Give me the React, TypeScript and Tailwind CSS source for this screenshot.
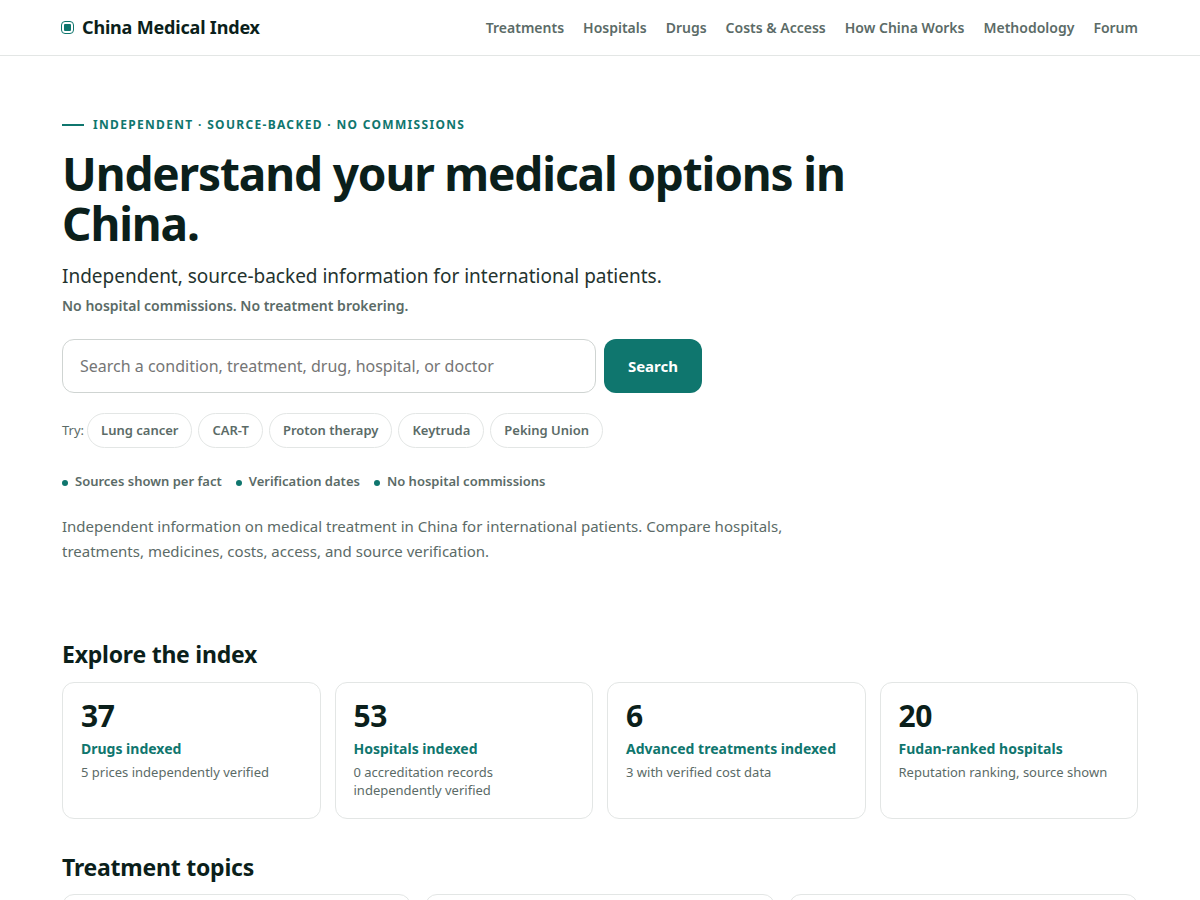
const navItems = [
  { href: "#treatments", label: "Treatments" },
  { href: "#hospitals", label: "Hospitals" },
  { href: "#drugs", label: "Drugs" },
  { href: "#costs", label: "Costs & Access" },
  { href: "#how-china-works", label: "How China Works" },
  { href: "#methodology", label: "Methodology" },
  { href: "#forum", label: "Forum" },
]

const suggestions = ["Lung cancer", "CAR-T", "Proton therapy", "Keytruda", "Peking Union"]

const trustPoints = ["Sources shown per fact", "Verification dates", "No hospital commissions"]

const stats = [
  { value: "37", label: "Drugs indexed", note: "5 prices independently verified" },
  { value: "53", label: "Hospitals indexed", note: "0 accreditation records independently verified" },
  { value: "6", label: "Advanced treatments indexed", note: "3 with verified cost data" },
  { value: "20", label: "Fudan-ranked hospitals", note: "Reputation ranking, source shown" },
]

function SiteHeader() {
  return (
    <header className="border-b border-[#e3e6e5]">
      <div className="mx-auto flex h-[55px] max-w-[1120px] items-center justify-between px-[22px]">
        <a href="#home" className="flex items-center gap-2 text-lg leading-[29px] font-bold tracking-[-0.01em] text-[#0b1f1b]">
          <span className="-ml-px flex size-[13px] items-center justify-center rounded-[4px] border border-[#0f766e]">
            <span className="size-[7px] rounded-[1px] bg-[#0f766e]" />
          </span>
          China Medical Index
        </a>
        <nav className="flex gap-[19px] text-sm font-semibold text-[#5b6b67]">
          {navItems.map((item) => (
            <a key={item.href} href={item.href} className="hover:text-[#0f766e]">
              {item.label}
            </a>
          ))}
        </nav>
      </div>
    </header>
  )
}

function Hero() {
  return (
    <section className="pt-[60px]">
      <p className="flex items-center gap-[9px] text-xs leading-[18px] font-bold tracking-[0.11em] text-[#0f766e] uppercase">
        <span className="h-[2px] w-[22px] bg-[#0f766e]" />
        Independent · Source-backed · No commissions
      </p>
      <h1 className="mt-[14px] max-w-[820px] text-[46px] leading-[50px] font-bold tracking-tight text-[#0b1f1b]">
        Understand your medical options in China.
      </h1>
      <p className="mt-[13px] text-[19px] leading-[30px] text-[#24332f]">
        Independent, source-backed information for international patients.
      </p>
      <p className="mt-1 text-sm leading-[22px] font-semibold text-[#5b6b67]">
        No hospital commissions. No treatment brokering.
      </p>

      <form className="mt-[22px] flex max-w-[640px] gap-2" onSubmit={(e) => e.preventDefault()}>
        <input
          type="search"
          aria-label="Search the index"
          placeholder="Search a condition, treatment, drug, hospital, or doctor"
          className="h-[54px] min-w-0 flex-1 rounded-xl border border-[#cfd4d2] bg-white px-[17px] text-base placeholder:text-[#757575]"
        />
        <button type="submit" className="rounded-xl bg-[#0f766e] px-6 text-[15px] font-bold text-white">
          Search
        </button>
      </form>

      <div className="mt-5 flex items-center gap-[3px] text-[13px] leading-[19px] text-[#5b6b67]">
        <span>Try:</span>
        <div className="flex flex-wrap gap-1.5">
          {suggestions.map((item) => (
            <a key={item} href="#search" className="rounded-full border border-[#e3e6e5] px-[13px] py-[7px] font-semibold">
              {item}
            </a>
          ))}
        </div>
      </div>

      <ul className="mt-[23px] flex flex-wrap gap-[14px] text-[13px] leading-5 font-semibold text-[#5b6b67]">
        {trustPoints.map((point) => (
          <li key={point} className="flex items-center gap-[7px]">
            <span className="mt-[3px] size-1.5 rounded-full bg-[#0f766e]" />
            {point}
          </li>
        ))}
      </ul>

      <p className="mt-[23px] max-w-[760px] text-[15px] leading-[25px] text-[#5b6b67]">
        Independent information on medical treatment in China for international patients. Compare hospitals,
        treatments, medicines, costs, access, and source verification.
      </p>
    </section>
  )
}

export default function App() {
  return (
    <div className="bg-white font-['Noto_Sans',sans-serif] text-[#0b1f1b]">
      <SiteHeader />
      <main className="mx-auto max-w-[1120px] px-[22px]">
        <Hero />

        <section className="mt-[74px]">
          <h2 className="text-[23px] leading-8 font-bold tracking-[-0.01em]">Explore the index</h2>
          <div className="mt-3 grid grid-cols-4 gap-[14px]">
            {stats.map((stat) => (
              <a key={stat.label} href="#index" className="rounded-xl border border-[#e3e6e5] px-[18px] pt-[18px] pb-[19px]">
                <div className="text-3xl leading-[30px] font-bold tracking-[-0.01em]">{stat.value}</div>
                <div className="mt-2 text-sm leading-5 font-bold text-[#0f766e]">{stat.label}</div>
                <div className="mt-1 text-[13px] leading-[18px] text-[#5b6b67]">{stat.note}</div>
              </a>
            ))}
          </div>
        </section>

        <section className="mt-8">
          <h2 className="text-[23px] leading-8 font-bold tracking-[-0.01em]">Treatment topics</h2>
          <div className="mt-[11px] grid grid-cols-3 gap-[14px]">
            <div className="h-24 rounded-xl border border-[#e3e6e5]" />
            <div className="h-24 rounded-xl border border-[#e3e6e5]" />
            <div className="h-24 rounded-xl border border-[#e3e6e5]" />
          </div>
        </section>
      </main>
    </div>
  )
}
